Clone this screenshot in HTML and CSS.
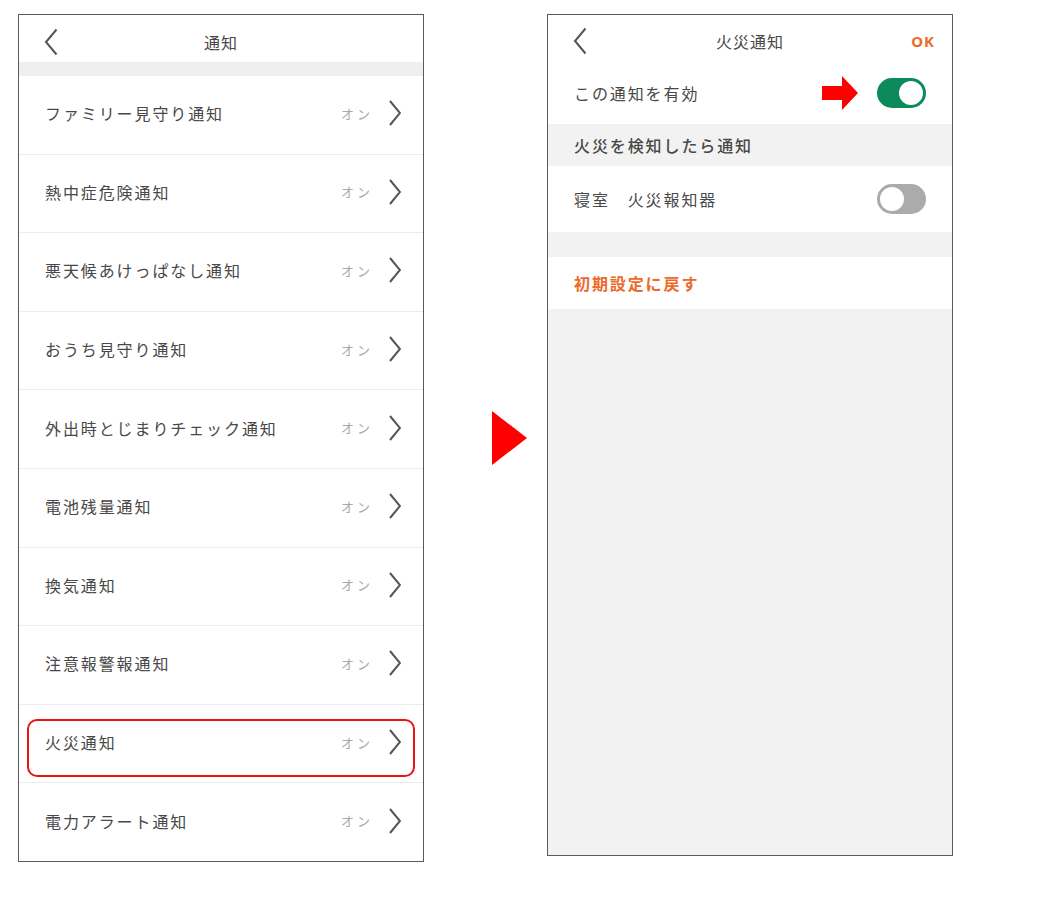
FILE: index.html
```html
<!DOCTYPE html>
<html lang="ja">
<head>
    <meta charset="UTF-8">
    <title>火災通知</title>
    <link rel="stylesheet" href="styles.css">
</head>
<body>
<div class="screen screen-list">
    <header class="nav">
        <svg class="back" width="14" height="28" viewBox="0 0 14 28"><path d="M12.5 1.5 L2 14 L12.5 26.5" fill="none" stroke="#555" stroke-width="2"/></svg>
        <h1>通知</h1>
        <span class="nav-right"></span>
    </header>
    <div class="band"></div>
    <ul class="list">
        <li><span class="label">ファミリー見守り通知</span><span class="state">オン</span><span class="chev"></span></li>
        <li><span class="label">熱中症危険通知</span><span class="state">オン</span><span class="chev"></span></li>
        <li><span class="label">悪天候あけっぱなし通知</span><span class="state">オン</span><span class="chev"></span></li>
        <li><span class="label">おうち見守り通知</span><span class="state">オン</span><span class="chev"></span></li>
        <li><span class="label">外出時とじまりチェック通知</span><span class="state">オン</span><span class="chev"></span></li>
        <li><span class="label">電池残量通知</span><span class="state">オン</span><span class="chev"></span></li>
        <li><span class="label">換気通知</span><span class="state">オン</span><span class="chev"></span></li>
        <li><span class="label">注意報警報通知</span><span class="state">オン</span><span class="chev"></span></li>
        <li class="picked"><span class="label">火災通知</span><span class="state">オン</span><span class="chev"></span><span class="highlight"></span></li>
        <li><span class="label">電力アラート通知</span><span class="state">オン</span><span class="chev"></span></li>
    </ul>
</div>

<div class="step-arrow"></div>

<div class="screen screen-detail">
    <header class="nav">
        <svg class="back" width="14" height="28" viewBox="0 0 14 28"><path d="M12.5 1.5 L2 14 L12.5 26.5" fill="none" stroke="#555" stroke-width="2"/></svg>
        <h1>火災通知</h1>
        <span class="nav-right ok">OK</span>
    </header>
    <div class="row row-enable">
        <span class="label">この通知を有効</span>
        <svg class="pointer" width="36" height="34" viewBox="0 0 36 34"><path d="M0 10 H20 V0 L36 17 L20 34 V24 H0 Z" fill="#ff0000"/></svg>
        <span class="toggle on"></span>
    </div>
    <div class="section-title">火災を検知したら通知</div>
    <div class="row row-device">
        <span class="label">寝室　火災報知器</span>
        <span class="toggle"></span>
    </div>
    <div class="spacer"></div>
    <div class="row row-reset">
        <span class="reset">初期設定に戻す</span>
    </div>
</div>
</body>
</html>
```

FILE: styles.css
```css
body {
    margin: 0;
    padding: 14px 0 0 18px;
    background: #fff;
    font-family: "Noto Sans CJK JP", "Noto Sans", sans-serif;
    color: #484848;
    display: flex;
    align-items: flex-start;
}
.screen {
    box-sizing: border-box;
    width: 406px;
    border: 1px solid #5a5a5a;
    display: flex;
    flex-direction: column;
}
.screen-list {
    height: 848px;
}
.screen-detail {
    height: 842px;
    background: #f2f2f2;
}
.nav {
    height: 47px;
    flex: none;
    display: flex;
    align-items: center;
    padding: 0 17px 0 25px;
    background: #fff;
    box-sizing: border-box;
}
.screen-list .nav {
    padding-top: 7px;
}
.screen-detail .nav {
    padding-top: 4px;
}
.nav h1 {
    flex: 1;
    margin: 0;
    text-align: center;
    font-size: 16px;
    font-weight: normal;
    letter-spacing: 1px;
    color: #484848;
}
.back {
    width: 14px;
    margin-right: 18px;
    flex: none;
}
.nav-right {
    width: 40px;
    text-align: right;
}
.ok {
    color: #ec6a2a;
    font-weight: bold;
    font-size: 15px;
    letter-spacing: 1px;
    font-family: "Noto Sans", sans-serif;
}
.band {
    height: 14px;
    background: #efefef;
    flex: none;
}
.list {
    list-style: none;
    margin: 0;
    padding: 0;
    flex: 1;
    display: flex;
    flex-direction: column;
}
.list li {
    flex: 1;
    display: flex;
    align-items: center;
    padding: 0 22px 3px 26px;
    border-bottom: 1px solid #ececec;
    position: relative;
}
.list li:last-child {
    border-bottom: none;
}
.label {
    font-size: 16px;
    letter-spacing: 1.9px;
    white-space: nowrap;
}
.list .label {
    flex: 1;
}
.state {
    font-size: 13px;
    letter-spacing: 3px;
    color: #a8a8a8;
    margin-right: 16px;
}
.chev {
    width: 12px;
    height: 26px;
    background: no-repeat center / 12px 26px url("data:image/svg+xml;utf8,<svg xmlns='http://www.w3.org/2000/svg' width='12' height='26' viewBox='0 0 12 26'><path d='M1 1 L11 13 L1 25' fill='none' stroke='%23555' stroke-width='2'/></svg>");
}
.highlight {
    position: absolute;
    left: 8px;
    right: 8px;
    top: 14px;
    bottom: 5px;
    border: 2px solid #ee1111;
    border-radius: 10px;
}
.step-arrow {
    align-self: center;
    margin: 0 20px 0 68px;
    width: 0;
    height: 0;
    border-top: 27px solid transparent;
    border-bottom: 27px solid transparent;
    border-left: 35px solid #ff0000;
}
.row {
    display: flex;
    align-items: center;
    background: #fff;
    padding: 0 26px 0 26px;
}
.row-enable {
    height: 62px;
}
.row-enable .label {
    flex: 1;
}
.pointer {
    margin-right: 19px;
}
.section-title {
    height: 42px;
    display: flex;
    align-items: center;
    padding-left: 26px;
    font-size: 16px;
    letter-spacing: 1.9px;
    font-weight: 500;
    color: #484848;
}
.row-device {
    height: 66px;
    justify-content: space-between;
}
.spacer {
    height: 25px;
}
.row-reset {
    height: 52px;
}
.reset {
    font-size: 16px;
    letter-spacing: 1.9px;
    color: #ec6a2a;
    font-weight: bold;
}
.toggle {
    box-sizing: border-box;
    width: 49px;
    height: 30px;
    border-radius: 15px;
    background: #ababab;
    position: relative;
    flex: none;
}
.toggle::after {
    content: "";
    position: absolute;
    box-sizing: border-box;
    width: 28px;
    height: 28px;
    top: 1px;
    left: 1px;
    border-radius: 50%;
    background: #fff;
    border: 2px solid #ababab;
}
.toggle.on {
    background: #0c8a5c;
}
.toggle.on::after {
    left: 20px;
    border-color: #0c8a5c;
}
```
